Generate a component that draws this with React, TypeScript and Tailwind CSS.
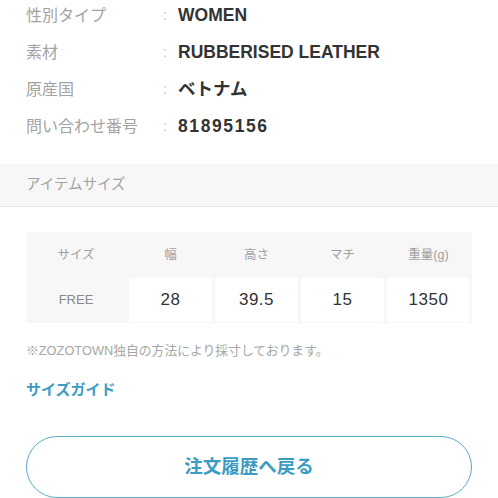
const font = "font-['Liberation_Sans','Noto_Sans_CJK_JP',sans-serif]";

const specs = [
  { label: "性別タイプ", value: "WOMEN", mono: false },
  { label: "素材", value: "RUBBERISED LEATHER", mono: false },
  { label: "原産国", value: "ベトナム", mono: false },
  { label: "問い合わせ番号", value: "81895156", mono: true },
];

const heads = ["サイズ", "幅", "高さ", "マチ", "重量(g)"];
const values = ["28", "39.5", "15", "1350"];

export default function App() {
  return (
    <div className={`w-[498px] h-[498px] overflow-hidden bg-white ${font}`}>
      {/* spec rows */}
      <div className="-mt-[3px] px-[26px]">
        {specs.map((s) => (
          <div key={s.label} className="flex h-[37px] items-center">
            <span className="w-[137px] text-[16px] text-[#a3a3a3]">{s.label}</span>
            <span className="w-[15px] text-[14px] text-[#c4c4c4]">:</span>
            <span
              className={
                s.mono
                  ? "text-[17.5px] font-bold tracking-[1.6px] text-[#333]"
                  : "text-[17.5px] font-bold text-[#333]"
              }
            >
              {s.value}
            </span>
          </div>
        ))}
      </div>

      {/* section header */}
      <div className="mt-[19px] flex h-[43px] items-center border-b border-[#e6e6e6] bg-[#f7f7f7] px-[26px]">
        <span className="text-[14.5px] text-[#a3a3a3]">アイテムサイズ</span>
      </div>

      {/* size table */}
      <div className="mx-[26px] mt-[25px] bg-[#f7f7f7] pb-[1px] pr-[1px]">
        <div className="grid grid-cols-[100px_repeat(4,83px)] gap-x-[3px]">
          {heads.map((h) => (
            <div key={h} className="flex h-[46px] items-center justify-center text-[12.5px] text-[#a0a0a0]">
              {h}
            </div>
          ))}
          <div className="flex h-[44px] items-center justify-center text-[13px] text-[#8a8a8a]">FREE</div>
          {values.map((v) => (
            <div
              key={v}
              className="flex h-[44px] items-center justify-center rounded-[2px] bg-white text-[17px] tracking-[0.5px] text-[#333]"
            >
              {v}
            </div>
          ))}
        </div>
      </div>

      <p className="mt-[19px] px-[26px] text-[12.8px] leading-[18px] text-[#a6a6a6]">
        ※ZOZOTOWN独自の方法により採寸しております。
      </p>

      <p className="mt-[20px] px-[26px] text-[15px] font-bold leading-[20px] text-[#3b9cc3]">サイズガイド</p>

      <div className="mt-[36px] px-[26px]">
        <button className="flex h-[62px] w-full items-center justify-center rounded-full border border-[#5eabc6] bg-white text-[18.5px] font-bold text-[#3b9cc3]">
          注文履歴へ戻る
        </button>
      </div>
    </div>
  );
}
